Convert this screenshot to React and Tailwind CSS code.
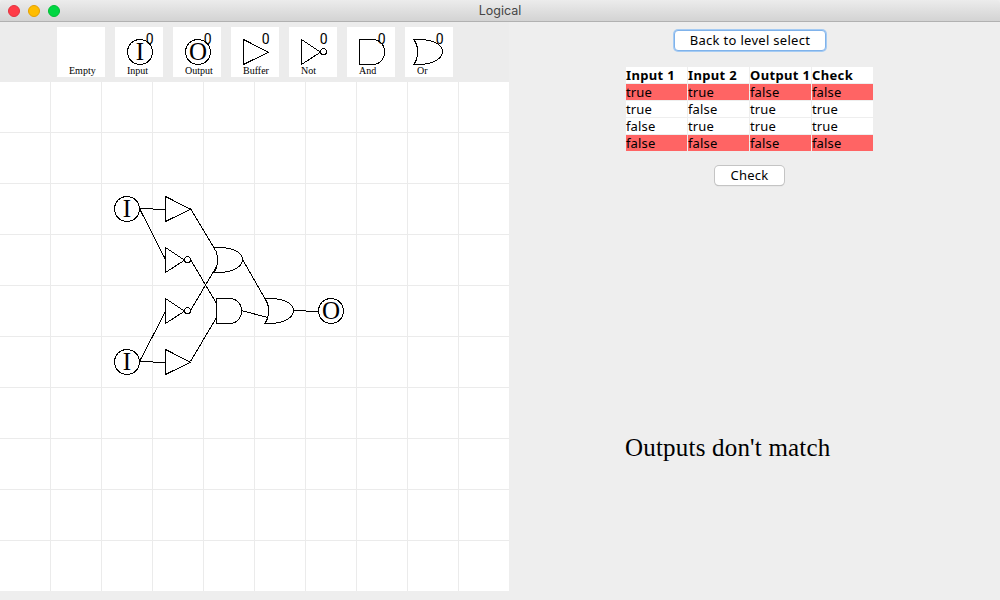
import React from "react";

const stroke = { fill: "none", stroke: "#000", strokeWidth: 1, shapeRendering: "crispEdges" };

function Letter({ children }) {
  return (
    <text x="13" y="21.4" textAnchor="middle" fontSize="25" fill="#000" stroke="none" className="font-['Liberation_Serif',serif]">
      {children}
    </text>
  );
}

function Gate({ type, x, y }) {
  return (
    <g transform={`translate(${x} ${y})`} {...stroke}>
      {(type === "Input" || type === "Output") && <circle cx="13" cy="13" r="12.5" />}
      {type === "Input" && <Letter>I</Letter>}
      {type === "Output" && <Letter>O</Letter>}
      {type === "Buffer" && <path d="M.5 .5V25.5L25.5 13.2Z" />}
      {type === "Not" && (
        <>
          <path d="M.5 .5V25.5L19.5 13.2Z" />
          <circle cx="22.5" cy="12.5" r="3" />
        </>
      )}
      {type === "And" && <path d="M.5 .5H13.5C21 .5 25.5 6 25.5 13S21 25.5 13.5 25.5H.5Z" />}
      {type === "Or" && <path d="M-2.5 .5H3C16 .5 26.5 5 26.5 12.5S16 25.5 3 25.5H-2.5C3 20 3 6 -2.5 .5" />}
    </g>
  );
}

const tools = [
  { name: "Empty" },
  { name: "Input", x: 12 },
  { name: "Output", x: 12 },
  { name: "Buffer", x: 12 },
  { name: "Not", x: 12 },
  { name: "And", x: 12 },
  { name: "Or", x: 11 },
];

function Tool({ name, x }) {
  return (
    <div className="flex h-[50px] w-12 flex-col bg-white">
      <svg className="h-[38px] w-12 shrink-0 overflow-visible" viewBox="0 0 48 38">
        {name !== "Empty" && (
          <>
            <Gate type={name} x={x} y={12} />
            <text x="30.7" y="17" fontSize="14" className="font-['Roboto',sans-serif] font-normal">0</text>
          </>
        )}
      </svg>
      <span className="pl-3 font-['Liberation_Serif',serif] text-[10px] leading-[12px]">{name}</span>
    </div>
  );
}

const gates = [
  ["Input", 114, 196],
  ["Input", 114, 349],
  ["Buffer", 165, 196],
  ["Not", 165, 247],
  ["Not", 165, 298],
  ["Buffer", 165, 349],
  ["Or", 216, 247],
  ["And", 216, 298],
  ["Or", 267, 298],
  ["Output", 318, 298],
];

const wires = [
  "M139.5 208.5L165.5 209.5",
  "M139.5 208.5L165.5 259.5",
  "M139.5 361.5L165.5 362.5",
  "M139.5 361.5L165.5 311.5",
  "M190.5 208.5L214.5 248.5",
  "M190.5 259.5L216.5 303.5",
  "M190.5 310.5L216.5 266.5",
  "M190.5 361.5L216.5 317.5",
  "M242.5 259.5L265.5 299.5",
  "M241.5 310.5L267.5 317.5",
  "M293.5 310.5L318.5 311.5",
];

function Board() {
  return (
    <main className="relative grid h-[509px] w-[509px] grid-cols-[repeat(10,50px)] grid-rows-[repeat(10,50px)] gap-px bg-[#ebebeb]">
      {Array.from({ length: 100 }, (_, i) => (
        <div key={i} className="bg-white" />
      ))}
      <svg className="absolute inset-0 h-full w-full" viewBox="0 82 509 509">
        {wires.map((d) => (
          <path key={d} d={d} {...stroke} />
        ))}
        {gates.map(([type, x, y]) => (
          <Gate key={`${x}-${y}`} type={type} x={x} y={y} />
        ))}
      </svg>
    </main>
  );
}

const headings = ["Input 1", "Input 2", "Output 1", "Check"];
const rows = [
  [true, true, false, false],
  [true, false, true, true],
  [false, true, true, true],
  [false, false, false, false],
];

function TruthTable() {
  return (
    <div className="mt-4 ml-[117px] grid w-[247px] grid-cols-[repeat(4,61px)] auto-rows-[16px] gap-px text-[13px] leading-4 whitespace-nowrap">
      {headings.map((h) => (
        <div key={h} className="bg-white font-bold tracking-[0.35px]">{h}</div>
      ))}
      {rows.map((row, r) =>
        row.map((value, c) => (
          <div key={`${r}-${c}`} className={row[3] ? "bg-white tracking-[0.15px]" : "bg-[#ff6464] tracking-[0.15px]"}>{String(value)}</div>
        ))
      )}
    </div>
  );
}

export default function App() {
  return (
    <div className="flex h-[600px] w-[1000px] flex-col overflow-hidden bg-[#eeeeee] font-['Noto_Sans',sans-serif] text-black">
      <header className="grid h-[22px] shrink-0 grid-cols-[1fr_auto_1fr] items-center rounded-t-[4px] border-b border-[#b1b1b1] bg-linear-to-b from-[#ececec] to-[#d3d3d3]">
        <div className="flex gap-2 pl-2">
          <span className="size-3 rounded-full border border-[#e2323f] bg-[#ff3b47]" />
          <span className="size-3 rounded-full border border-[#e5a000] bg-[#ffbd00]" />
          <span className="size-3 rounded-full border border-[#00bd35] bg-[#00d742]" />
        </div>
        <h1 className="pt-px font-['Inter',sans-serif] text-[12.5px] leading-5 text-[#454545]">Logical</h1>
      </header>
      <div className="flex min-h-0 flex-1">
        <div className="flex w-[509px] shrink-0 flex-col">
          <nav className="flex h-[60px] shrink-0 gap-[10px] bg-[#ececec] pt-[5px] pl-[57px]">
            {tools.map((t) => (
              <Tool key={t.name} {...t} />
            ))}
          </nav>
          <Board />
        </div>
        <aside className="flex flex-1 flex-col items-start">
          <button className="mt-2 ml-[165px] flex h-[21px] w-[152px] justify-center rounded-[4px] border border-[#7fb2ea] bg-white text-[13px] leading-[19px] tracking-[0.3px] whitespace-nowrap shadow-[0_0_0_1px_#a5cbf3]">
            Back to level select
          </button>
          <TruthTable />
          <button className="mt-[15px] ml-[206px] flex h-[19px] w-[69px] justify-center rounded-[4px] bg-white text-[13px] leading-[18px] tracking-[0.2px] shadow-[0_0_0_1px_#c4c4c4,0_1px_1px_#aaaaaa]">
            Check
          </button>
          <p className="mt-[249px] ml-[116px] font-['Liberation_Serif',serif] text-[25px] leading-7 tracking-[0.2px] whitespace-nowrap">Outputs don't match</p>
        </aside>
      </div>
    </div>
  );
}
